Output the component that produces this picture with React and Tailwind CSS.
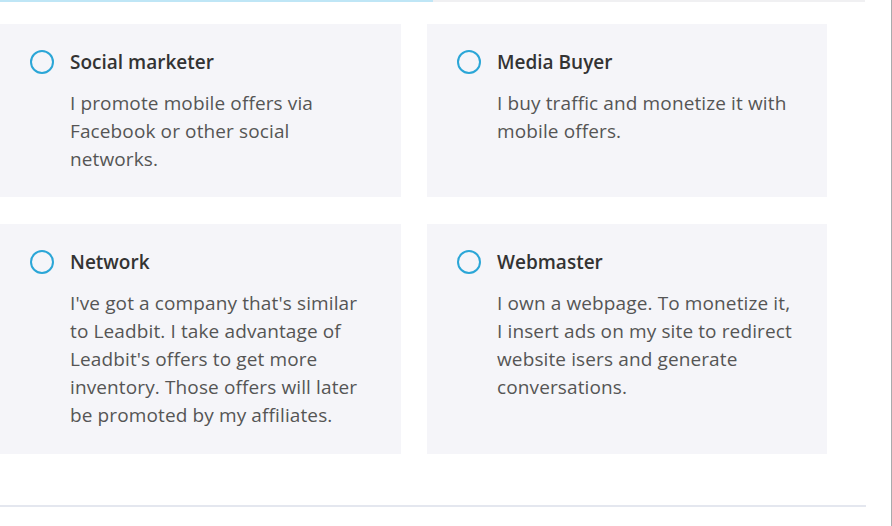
export default function App() {
  const cards = [
    { title: "Social marketer", lines: ["I promote mobile offers via", "Facebook or other social", "networks."] },
    { title: "Media Buyer", lines: ["I buy traffic and monetize it with", "mobile offers."] },
    { title: "Network", lines: ["I've got a company that's similar", "to Leadbit. I take advantage of", "Leadbit's offers to get more", "inventory. Those offers will later", "be promoted by my affiliates."] },
    { title: "Webmaster", lines: ["I own a webpage. To monetize it,", "I insert ads on my site to redirect", "website isers and generate", "conversations."] },
  ];
  return (
    <div className="w-[892px] h-[526px] bg-white border-r border-[#a9abad] overflow-hidden" style={{ fontFamily: '"Open Sans", sans-serif' }}>
      <div className="flex h-[2px] w-[865px]">
        <div className="w-[433px] bg-[#bfe6f6]" />
        <div className="flex-1 bg-[#f0f0f2]" />
      </div>
      <div className="grid grid-cols-[401px_400px] items-start gap-x-[26px] gap-y-[27px] mt-[22px]">
        {cards.map((c, i) => (
          <div key={c.title} className={`bg-[#f5f5f9] pt-[24px] ${i < 2 ? "h-[173px]" : "h-[230px]"}`}>
            <div className="flex items-center h-[28px]">
              <div className="ml-[30px] w-[24px] h-[24px] rounded-full border-2 border-[#2ba6d7]" />
              <div className="ml-[16px] text-[19px] font-semibold text-[#333]">{c.title}</div>
            </div>
            <div className="ml-[70px] mt-[13px] text-[19px] leading-[28px] tracking-[0.12px] text-[#555]">
              {c.lines.map((l) => (
                <div key={l} className="whitespace-nowrap">{l}</div>
              ))}
            </div>
          </div>
        ))}
      </div>
      <div className="mt-[51px] h-[2px] w-[866px] bg-[#e4e7ef]" />
    </div>
  );
}
